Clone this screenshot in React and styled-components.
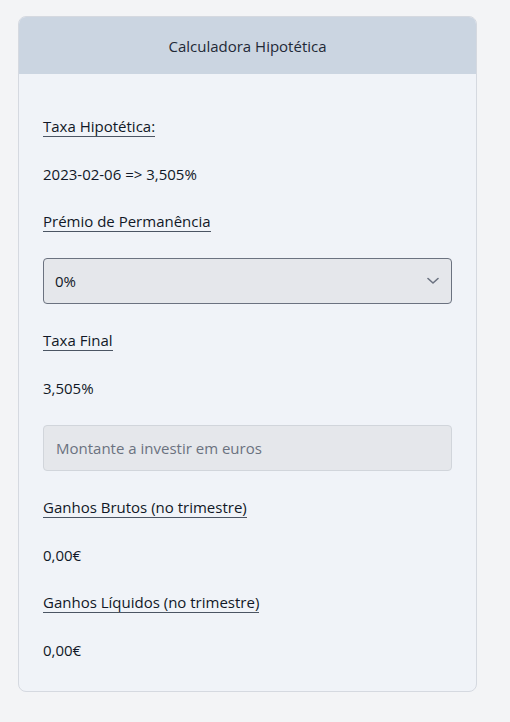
import React, { useState } from 'react';
import styled, { createGlobalStyle } from 'styled-components';

const GlobalStyle = createGlobalStyle`
  html, body {
    margin: 0;
    padding: 0;
    background-color: #f3f4f6;
    font-family: "Open Sans", "Noto Sans", sans-serif;
    color: #111827;
  }
  * { box-sizing: border-box; }
`;

const Page = styled.div`
  padding: 16px 0 0 18px;
  min-height: 722px;
`;

const Card = styled.div`
  width: 459px;
  background-color: #f0f3f8;
  border: 1px solid #d5d9e0;
  border-radius: 8px;
  overflow: hidden;
`;

const Header = styled.div`
  height: 57px;
  background-color: #cbd5e1;
  display: flex;
  align-items: center;
  justify-content: center;
  font-size: 15px;
  color: #1f2937;
`;

const Body = styled.div`
  display: flex;
  flex-direction: column;
  align-items: flex-start;
  gap: 26px;
  padding: 42px 24px 30px 24px;
`;

const Label = styled.span`
  display: inline-block;
  font-size: 15px;
  line-height: 20px;
  border-bottom: 1px solid #4b5563;
`;

const Value = styled.div`
  font-size: 15px;
  line-height: 22px;
`;

const SelectWrap = styled.div`
  position: relative;
  width: 409px;
`;

const Select = styled.select`
  appearance: none;
  width: 100%;
  height: 46px;
  padding: 0 40px 0 11px;
  font-family: inherit;
  font-size: 15px;
  color: #111827;
  background-color: #e5e7eb;
  border: 1px solid #6b7280;
  border-radius: 4px;
  outline: none;
`;

const Chevron = styled.svg`
  position: absolute;
  right: 13px;
  top: 19px;
  pointer-events: none;
`;

const Input = styled.input`
  width: 409px;
  height: 46px;
  padding: 0 12px;
  font-family: inherit;
  font-size: 15px;
  color: #111827;
  background-color: #e5e7eb;
  border: 1px solid #d1d5db;
  border-radius: 4px;
  outline: none;

  &::placeholder {
    color: #6b7280;
  }
`;

function App() {
  const [premio, setPremio] = useState('0');
  const [montante, setMontante] = useState('');

  return (
    <Page>
      <GlobalStyle />
      <Card>
        <Header>Calculadora Hipotética</Header>
        <Body>
          <Label>Taxa Hipotética:</Label>
          <Value>2023-02-06 =&gt; 3,505%</Value>
          <Label>Prémio de Permanência</Label>
          <SelectWrap>
            <Select value={premio} onChange={(e) => setPremio(e.target.value)}>
              <option value="0">0%</option>
              <option value="0.25">0,25%</option>
              <option value="0.5">0,5%</option>
            </Select>
            <Chevron width="12" height="8" viewBox="0 0 12 8" fill="none">
              <path d="M1 1.5 L6 6 L11 1.5" stroke="#6b7280" strokeWidth="1.6" strokeLinecap="round" strokeLinejoin="round" />
            </Chevron>
          </SelectWrap>
          <Label>Taxa Final</Label>
          <Value>3,505%</Value>
          <Input
            type="text"
            placeholder="Montante a investir em euros"
            value={montante}
            onChange={(e) => setMontante(e.target.value)}
          />
          <Label>Ganhos Brutos (no trimestre)</Label>
          <Value>0,00€</Value>
          <Label>Ganhos Líquidos (no trimestre)</Label>
          <Value>0,00€</Value>
        </Body>
      </Card>
    </Page>
  );
}

export default App;
